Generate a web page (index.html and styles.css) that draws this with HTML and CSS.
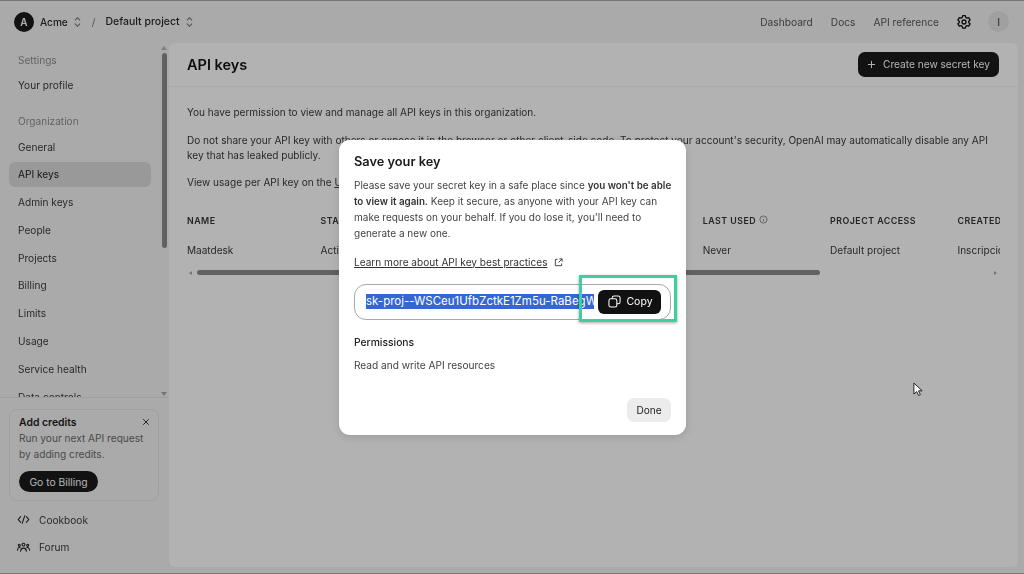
FILE: index.html
```html
<!DOCTYPE html>
<html lang="en">
<head>
<meta charset="utf-8">
<title>API keys</title>
<link rel="stylesheet" href="styles.css">
</head>
<body>
<div class="app">
  <header class="topbar">
    <div class="crumbs">
      <span class="logo">A</span>
      <span class="crumb">Acme</span>
      <svg class="updown" viewBox="0 0 10 14"><path d="M2 5l3-3 3 3M2 9l3 3 3-3"/></svg>
      <span class="slash">/</span>
      <span class="crumb wide">Default project</span>
      <svg class="updown" viewBox="0 0 10 14"><path d="M2 5l3-3 3 3M2 9l3 3 3-3"/></svg>
    </div>
    <nav class="toplinks">
      <span>Dashboard</span>
      <span>Docs</span>
      <span>API reference</span>
      <svg class="gear" viewBox="0 0 24 24"><path d="M10 2.500h4l.7 2.700 1.700 1 2.700-.8 2 3.500-2 1.900v2l2 1.900-2 3.500-2.700-.8-1.700 1-.7 2.700h-4l-.7-2.700-1.700-1-2.700.8-2-3.500 2-1.900v-2l-2-1.900 2-3.500 2.700.8 1.700-1z"/><circle cx="12" cy="12" r="3"/></svg>
      <span class="user">I</span>
    </nav>
  </header>
  <div class="body">
    <aside class="sidebar">
      <div class="navscroll">
        <div class="navlabel">Settings</div>
        <a class="navitem">Your profile</a>
        <div class="navlabel second">Organization</div>
        <a class="navitem">General</a>
        <a class="navitem active">API keys</a>
        <a class="navitem">Admin keys</a>
        <a class="navitem">People</a>
        <a class="navitem">Projects</a>
        <a class="navitem">Billing</a>
        <a class="navitem">Limits</a>
        <a class="navitem">Usage</a>
        <a class="navitem">Service health</a>
        <a class="navitem">Data controls</a>
        <span class="sb-up"></span>
        <span class="sb-thumb"></span>
        <span class="sb-down"></span>
      </div>
      <div class="sidefoot">
        <div class="credits">
          <div class="credits-head"><strong>Add credits</strong>
            <svg class="close" viewBox="0 0 10 10"><path d="M1.500 1.500l7 7M8.500 1.500l-7 7"/></svg>
          </div>
          <p>Run your next API request by adding credits.</p>
          <button class="billing">Go to Billing</button>
        </div>
        <a class="footlink">
          <svg class="footicon" viewBox="0 0 16 16"><path d="M4.500 4.500L1.500 8l3 3.500M11.500 4.500l3 3.500-3 3.500M9.500 3.500l-3 9"/></svg>
          Cookbook</a>
        <a class="footlink">
          <svg class="footicon" viewBox="0 0 16 16"><circle cx="8" cy="4.500" r="1.700"/><circle cx="2.800" cy="5.300" r="1.300"/><circle cx="13.200" cy="5.300" r="1.300"/><path d="M4.500 12.500c0-5 7-5 7 0M.6 11.500c0-3 2-3.800 3.400-3.300M15.400 11.500c0-3-2-3.800-3.400-3.300"/></svg>
          Forum</a>
      </div>
    </aside>
    <main class="panel">
      <div class="panelhead">
        <h1>API keys</h1>
        <button class="create">
          <svg class="plus" viewBox="0 0 10 10"><path d="M5 1v8M1 5h8"/></svg>
          Create new secret key</button>
      </div>
      <div class="panelbody">
        <p>You have permission to view and manage all API keys in this organization.</p>
        <p>Do not share your API key with others or expose it in the browser or other client-side code. To protect your account's security, OpenAI may automatically disable any API key that has leaked publicly.</p>
        <p>View usage per API key on the <u>Usage page</u>.</p>
        <div class="tablewrap">
          <div class="table">
            <div class="th">NAME</div><div class="th">STATUS</div><div class="th">SECRET KEY</div><div class="th">CREATED</div>
            <div class="th">LAST USED <svg class="info" viewBox="0 0 10 10"><circle cx="5" cy="5" r="4"/><path d="M5 4.500v2.500M5 2.800v.5"/></svg></div>
            <div class="th">PROJECT ACCESS</div><div class="th">CREATED BY</div>
            <div class="td">Maatdesk</div><div class="td">Active</div><div class="td">sk-...abcd</div><div class="td">Jan 1, 2025</div>
            <div class="td">Never</div><div class="td">Default project</div><div class="td">Inscripciones</div>
          </div>
        </div>
        <div class="hscroll"><span class="arrow-l"></span><span class="hthumb"></span><span class="arrow-r"></span></div>
      </div>
    </main>
  </div>
</div>
<div class="overlay">
  <section class="modal">
    <h2>Save your key</h2>
    <p class="lead">Please save your secret key in a safe place since <b>you won't be able to view it again.</b> Keep it secure, as anyone with your API key can make requests on your behalf. If you do lose it, you'll need to generate a new one.</p>
    <a class="learn"><u>Learn more about API key best practices</u>
      <svg class="ext" viewBox="0 0 10 10"><path d="M4 1.500H1.500v7h7V6M6 1h3v3M9 1L5 5"/></svg></a>
    <div class="keybox">
      <div class="keytext"><span class="selected">sk-proj--WSCeu1UfbZctkE1Zm5u-RaBegWxYz</span></div>
      <button class="copy">
        <svg class="copyicon" viewBox="0 0 14 14"><rect x="1" y="4" width="8.500" height="9" rx="2"/><path d="M4.500 4V3a2 2 0 0 1 2-2H11a2 2 0 0 1 2 2v4.500a2 2 0 0 1-2 2H9.500"/></svg>
        Copy</button>
      <span class="highlight"></span>
    </div>
    <div class="perm-title">Permissions</div>
    <div class="perm-text">Read and write API resources</div>
    <div class="modal-foot"><button class="done">Done</button></div>
  </section>
  <svg class="cursor" viewBox="0 0 12 16"><path d="M1 1v12l3-2.800 2 4.300 2-.9-2-4.200h4z"/></svg>
</div>
</body>
</html>
```
FILE: styles.css
```css
* { box-sizing: border-box; }
html, body { margin: 0; height: 100%; overflow: hidden; }
body {
  width: 1024px;
  height: 574px;
  position: relative;
  font-family: Inter, "Liberation Sans", sans-serif;
  font-size: 10.100px;
  color: #1a1a1a;
  background: #f4f4f4;
  filter: blur(.3px);
}
button { font-family: inherit; border: 0; cursor: pointer; }
p { margin: 0; }

.app { display: flex; flex-direction: column; height: 574px; }

.topbar {
  height: 43px;
  flex: none;
  display: flex;
  align-items: center;
  justify-content: space-between;
  padding: 0 15px 0 14px;
}
.crumbs { display: flex; align-items: center; }
.logo {
  width: 20px; height: 20px; border-radius: 50%;
  background: #1a1a1a; color: #fff;
  display: flex; align-items: center; justify-content: center;
  font-size: 10px; font-weight: 600;
  margin-right: 6px;
}
.crumb { font-weight: 500; font-size: 10.100px; color: #2a2a2a; }
.crumb.wide { font-size: 10.500px; }
.updown { width: 9px; height: 12px; margin-left: 5px; fill: none; stroke: #6e6e6e; stroke-width: 1.200; }
.slash { margin: 0 10px; color: #777; }
.toplinks { display: flex; align-items: center; gap: 18px; color: #555; font-size: 10.200px; }
.gear { width: 16px; height: 16px; margin-left: -1px; fill: none; stroke: #111; stroke-width: 2; stroke-linejoin: round; }
.user {
  width: 21px; height: 21px; border-radius: 50%; background: #e6e6e6;
  display: flex; align-items: center; justify-content: center;
  margin-left: -2px; color: #333; font-size: 10px;
}

.body { flex: 1; display: flex; min-height: 0; padding: 0 6px 7px 0; }

.sidebar { width: 169px; flex: none; display: flex; flex-direction: column; margin-bottom: -7px; }
.navscroll {
  position: relative;
  height: 355px;
  flex: none;
  overflow: hidden;
  padding: 10px 18px 0 9px;
  border-bottom: 1px solid #e4e4e4;
}
.navlabel { height: 14px; line-height: 14px; padding-left: 9px; color: #8d8d8d; font-size: 10.100px; margin-bottom: 5.500px; }
.navlabel.second { margin-top: 17px; margin-bottom: 6.500px; }
.navitem {
  display: block;
  height: 24.500px;
  line-height: 24.500px;
  margin-bottom: 3.300px;
  padding-left: 9px;
  border-radius: 6px;
  color: #3a3a3a;
  font-size: 10.150px;
}
.navitem.active { background: #dcdcdc; color: #222; }
.sb-up, .sb-down {
  position: absolute; left: 161px;
  border-left: 3px solid transparent; border-right: 3px solid transparent;
}
.sb-up { top: 3px; border-bottom: 4px solid #b9b9b9; }
.sb-down { top: 349px; border-top: 4px solid #a8a8a8; }
.sb-thumb { position: absolute; left: 162px; top: 10px; width: 5px; height: 195px; border-radius: 3px; background: #8c8c8c; }

.sidefoot { padding: 11px 11px 0 9px; }
.credits {
  width: 150px; height: 92px;
  border: 1px solid #e2e2e2;
  border-radius: 8px;
  padding: 5px 8px 5px 9px;
  background: #f4f4f4;
}
.credits-head { display: flex; align-items: center; justify-content: space-between; height: 14px; }
.credits-head strong { font-weight: 600; font-size: 10.400px; color: #1c1c1c; }
.close { width: 8px; height: 8px; fill: none; stroke: #333; stroke-width: 1.200; }
.credits p { font-size: 10.150px; line-height: 16.300px; color: #6b6b6b; margin-top: 1px; }
.billing {
  display: block; margin-top: 8.500px;
  height: 21px; width: 79px; border-radius: 11px;
  background: #1a1a1a; color: #fff; font-size: 10.300px; padding: 0;
}
.footlink {
  display: flex; align-items: center;
  height: 27.600px;
  padding-left: 8px;
  color: #3a3a3a;
  font-size: 10.150px;
  gap: 8px;
}
.sidefoot .credits + .footlink { margin-top: 5px; }
.footicon { width: 15px; height: 13px; fill: none; stroke: #222; stroke-width: 1.300; stroke-linecap: round; flex: none; margin-left: -1px; }

.panel {
  flex: 1;
  background: #fff;
  border-radius: 6px;
  min-width: 0;
  overflow: hidden;
}
.panelhead {
  height: 44px;
  border-bottom: 1px solid #f2f2f2;
  display: flex;
  align-items: center;
  justify-content: space-between;
  padding: 0 19px 1px 18px;
}
.panelhead h1 { margin: 0; font-size: 14.500px; font-weight: 600; color: #141414; }
.create {
  width: 141px; height: 25px;
  border-radius: 7px;
  background: #1a1a1a; color: #fff;
  font-size: 10.150px;
  display: flex; align-items: center; justify-content: center; gap: 7px;
  padding: 0;
}
.plus { width: 9px; height: 9px; fill: none; stroke: #fff; stroke-width: 1.100; }
.panelbody { padding: 18px 18px 0; line-height: 15px; color: #3a3a3a; font-size: 10.050px; }
.panelbody p { margin-bottom: 12.500px; }
.panelbody p + p + p { margin-bottom: 0; }

.tablewrap { width: 813px; overflow: hidden; margin-top: 23px; }
.table {
  display: grid;
  grid-template-columns: 133.500px repeat(6, 127.400px);
  width: 900px;
}
.th { font-size: 8.800px; font-weight: 600; letter-spacing: .5px; color: #333; height: 27px; line-height: 15px; white-space: nowrap; display: flex; align-items: flex-start; gap: 3px; }
.td { height: 31px; line-height: 20px; color: #3a3a3a; white-space: nowrap; }
.info { width: 9px; height: 9px; fill: none; stroke: #666; stroke-width: .8; margin-top: 2px; }

.hscroll { display: flex; align-items: center; height: 5px; width: 813px; margin-top: -1px; }
.arrow-l { margin-left: 2px; border-top: 2.500px solid transparent; border-bottom: 2.500px solid transparent; border-right: 3px solid #a8a8a8; }
.hthumb { margin-left: 5px; width: 623px; height: 5px; border-radius: 3px; background: #8c8c8c; }
.arrow-r { margin-left: auto; margin-right: 3px; border-top: 2.500px solid transparent; border-bottom: 2.500px solid transparent; border-left: 3px solid #a8a8a8; }

.overlay {
  position: absolute; inset: 0;
  background: rgba(0, 0, 0, .3);
  border-top: 1px solid #777;
  border-bottom: 1px solid #777;
  padding-left: 1px;
  display: flex; align-items: center; justify-content: center;
}
.modal {
  width: 347px; height: 295px;
  background: #fff;
  border-radius: 11px;
  padding: 14px 15px;
  display: flex; flex-direction: column;
  box-shadow: 0 2px 8px rgba(0, 0, 0, .12);
}
.modal h2 { margin: 0 0 8.500px; font-size: 12.800px; font-weight: 600; line-height: 15px; color: #1a1a1a; }
.lead { font-size: 10px; line-height: 16px; color: #444; margin-right: -4px; }
.lead b { font-weight: 600; font-size: 9.800px; line-height: 1; color: #333; }
.learn { display: flex; align-items: center; gap: 6px; margin-top: 13.500px; line-height: 15px; font-size: 10.100px; color: #333; }
.ext { width: 9px; height: 9px; fill: none; stroke: #333; stroke-width: 1; }
.keybox {
  position: relative;
  margin-top: 14px;
  width: 317px; height: 36px;
  border: 1px solid #a9a9a9;
  border-radius: 12px;
  display: flex; align-items: center;
  padding: 0 9px 0 11px;
  flex: none;
}
.keytext { width: 228px; overflow: hidden; white-space: nowrap; font-size: 11.500px; line-height: 15px; color: #fff; }
.selected { background: #3367d1; display: inline-block; padding-right: 20px; }
.copy {
  margin-left: 4px;
  width: 63px; height: 24px; border-radius: 6px;
  background: #111; color: #fff; font-size: 10.500px;
  display: flex; align-items: center; justify-content: center; gap: 5px; padding: 0 0 0 2px;
  flex: none;
}
.copyicon { width: 13px; height: 13px; fill: none; stroke: #fff; stroke-width: 1.100; }
.highlight {
  position: absolute;
  left: 224px; top: -9.500px;
  width: 98px; height: 47px;
  border: 3.500px solid #3ecf9e;
  box-shadow: 0 1px 3px rgba(0, 0, 0, .35);
  pointer-events: none;
}
.perm-title { margin-top: 15.500px; font-weight: 500; font-size: 10.300px; line-height: 15px; color: #222; }
.perm-text { margin-top: 7.500px; font-size: 10.150px; line-height: 15px; color: #444; }
.modal-foot { margin-top: auto; display: flex; justify-content: flex-end; }
.done { width: 44px; height: 24px; border-radius: 7px; background: #ececec; color: #222; font-size: 10.100px; padding: 0; margin-bottom: -1px; }
.cursor { position: absolute; left: 913px; top: 381px; width: 11px; height: 15px; fill: #fff; stroke: #111; stroke-width: 1; }
```
